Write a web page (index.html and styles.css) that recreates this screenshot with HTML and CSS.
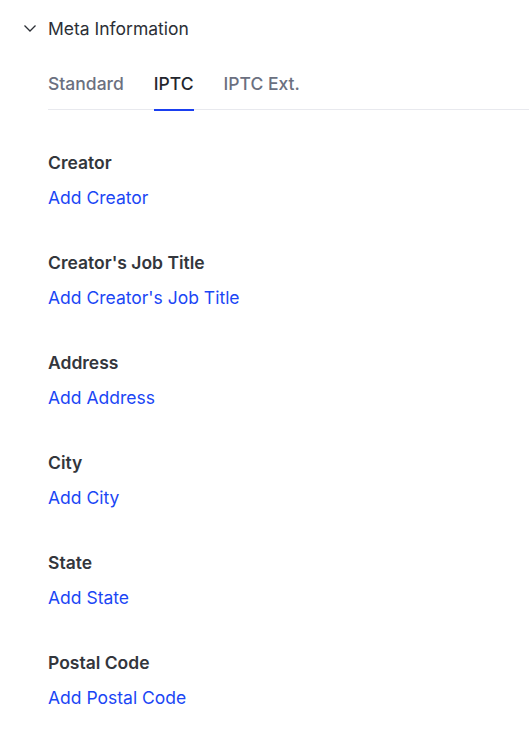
FILE: index.html
```html
<!DOCTYPE html>
<html>
<head>
<meta charset="utf-8">
<link rel="stylesheet" href="styles.css">
</head>
<body>
<div class="panel">
  <div class="header">
    <svg class="chev" width="14" height="14" viewBox="0 0 14 14"><path d="M1.5 4.5 L7 10 L12.5 4.5" fill="none" stroke="#2c2f36" stroke-width="1.3"/></svg>
    <span class="title">Meta Information</span>
  </div>
  <div class="content">
    <div class="tabs">
      <div class="tab">Standard</div>
      <div class="tab active">IPTC</div>
      <div class="tab">IPTC Ext.</div>
    </div>
    <div class="fields">
      <div class="field"><div class="label">Creator</div><a class="add">Add Creator</a></div>
      <div class="field"><div class="label">Creator's Job Title</div><a class="add">Add Creator's Job Title</a></div>
      <div class="field"><div class="label">Address</div><a class="add">Add Address</a></div>
      <div class="field"><div class="label">City</div><a class="add">Add City</a></div>
      <div class="field"><div class="label">State</div><a class="add">Add State</a></div>
      <div class="field"><div class="label">Postal Code</div><a class="add">Add Postal Code</a></div>
    </div>
  </div>
</div>
</body>
</html>
```
FILE: styles.css
```css
html, body { margin: 0; padding: 0; background: #fff; }
body { font-family: Inter, "Noto Sans", sans-serif; color: #2a2d34; }
.panel { padding-top: 16px; }
.header { display: flex; align-items: center; height: 24px; padding-left: 23px; }
.chev { margin-right: 11px; }
.title { font-size: 17.5px; color: #2c2f36; }
.content { padding-left: 48px; }
.tabs { display: flex; gap: 30px; border-bottom: 1px solid #e8e9ee; margin-top: 20px; height: 49px; }
.tab { font-size: 17.5px; color: #6b7080; font-weight: 500; line-height: 48px; position: relative; }
.tab.active { color: #23262d; }
.tab.active::after { content: ""; position: absolute; left: 0; right: 0; bottom: -2px; height: 2px; background: #1a3ff0; }
.fields { padding-top: 41px; }
.field { height: 100px; }
.label { font-size: 17.5px; font-weight: 600; color: #33363c; line-height: 24px; }
.add { display: block; font-size: 17.5px; color: #1b46f5; line-height: 24px; margin-top: 11px; cursor: pointer; }
```
